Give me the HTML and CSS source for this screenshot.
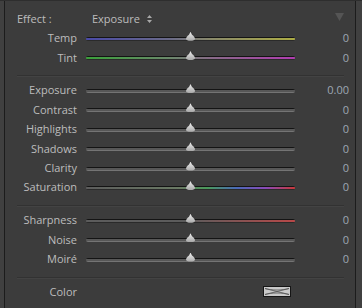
FILE: index.html
```html
<!DOCTYPE html>
<html>
<head>
<meta charset="utf-8">
<link rel="stylesheet" href="styles.css">
</head>
<body>
<div class="frame">
  <div class="panel">
    <div class="header">
      <span class="effect">Effect :</span>
      <span class="preset">Exposure</span>
      <svg class="updown" width="5" height="8" viewBox="0 0 5 8"><path d="M2.5 0 L5 3 L0 3 Z M0 5 L5 5 L2.5 8 Z" fill="#a8a8a8"/></svg>
      <span class="spacer"></span>
      <svg class="collapse" width="9" height="8" viewBox="0 0 9 8"><path d="M0 0 L9 0 L4.5 8 Z" fill="#555"/></svg>
    </div>

    <div class="group">
      <div class="row"><span class="label">Temp</span><div class="track temp"><span class="thumb"></span></div><span class="value">0</span></div>
      <div class="row"><span class="label">Tint</span><div class="track tint"><span class="thumb"></span></div><span class="value">0</span></div>
    </div>
    <div class="divider"></div>

    <div class="group">
      <div class="row"><span class="label">Exposure</span><div class="track"><span class="thumb"></span></div><span class="value">0.00</span></div>
      <div class="row"><span class="label">Contrast</span><div class="track"><span class="thumb"></span></div><span class="value">0</span></div>
      <div class="row"><span class="label">Highlights</span><div class="track"><span class="thumb"></span></div><span class="value">0</span></div>
      <div class="row"><span class="label">Shadows</span><div class="track"><span class="thumb"></span></div><span class="value">0</span></div>
      <div class="row"><span class="label">Clarity</span><div class="track"><span class="thumb"></span></div><span class="value">0</span></div>
      <div class="row"><span class="label">Saturation</span><div class="track sat"><span class="thumb"></span></div><span class="value">0</span></div>
    </div>
    <div class="divider"></div>

    <div class="group">
      <div class="row"><span class="label">Sharpness</span><div class="track sharp"><span class="thumb"></span></div><span class="value">0</span></div>
      <div class="row"><span class="label">Noise</span><div class="track"><span class="thumb"></span></div><span class="value">0</span></div>
      <div class="row"><span class="label">Moiré</span><div class="track"><span class="thumb"></span></div><span class="value">0</span></div>
    </div>
    <div class="divider"></div>

    <div class="color-row">
      <span class="label">Color</span>
      <svg class="swatch" width="28" height="11" viewBox="0 0 28 11">
        <rect x="0.5" y="0.5" width="27" height="10" fill="#c9c9c9" stroke="#151515"/>
        <path d="M2 2.5 C9 4.5 19 4.5 26 2.5 M2 8.5 C9 6.5 19 6.5 26 8.5 M2 2.5 L26 8.5 M2 8.5 L26 2.5" fill="none" stroke="#555" stroke-width="0.8"/>
      </svg>
    </div>
  </div>
</div>
</body>
</html>
```

FILE: styles.css
```css
html, body {
  margin: 0;
  padding: 0;
  background: #3a3a3a;
}
body {
  width: 362px;
  height: 308px;
  overflow: hidden;
  font-family: "Open Sans", "DejaVu Sans", sans-serif;
  font-size: 11px;
  color: #bcbcbc;
}
.frame {
  display: flex;
  height: 308px;
  padding-left: 4px;
  border-top: 1px solid #2e2e2e;
  box-sizing: border-box;
  background: #404040;
}
.panel {
  width: 350px;
  background: #3c3c3c;
  border-left: 1px solid #1c1c1c;
  border-right: 1px solid #1c1c1c;
  padding-top: 8px;
  box-sizing: content-box;
}
.header {
  display: flex;
  align-items: center;
  height: 19px;
  padding-left: 12px;
  padding-right: 11px;
}
.effect {
  width: 75px;
}
.preset {
  margin-right: 7px;
}
.updown {
  margin-top: 1px;
}
.spacer {
  flex: 1;
}
.collapse {
  margin-top: -3px;
}
.group {
  display: flex;
  flex-direction: column;
}
.row {
  display: grid;
  grid-template-columns: 72px 209px 45px;
  column-gap: 9px;
  align-items: center;
  height: 19.4px;
}
.label {
  text-align: right;
  white-space: nowrap;
}
.value {
  text-align: right;
  color: #9ea7b3;
  margin-left: -9px;
}
.track {
  position: relative;
  height: 4px;
  margin-top: 2px;
  border-radius: 2px;
  background: linear-gradient(#141414 0 1px, #575757 1px 3px, #747474 3px);
}
.track.temp {
  background: linear-gradient(#141414 0 1px, transparent 1px 3px, #2a2a2a 3px),
              linear-gradient(90deg, #4a4aa8, #6a6a88 40%, #8a8a6a 60%, #acac44);
}
.track.tint {
  background: linear-gradient(#141414 0 1px, transparent 1px 3px, #2a2a2a 3px),
              linear-gradient(90deg, #3aa03a, #6a886a 40%, #886a88 60%, #b03cb0);
}
.track.sat {
  background: linear-gradient(#141414 0 1px, transparent 1px 3px, #2a2a2a 3px),
              linear-gradient(90deg, #5c5c5c, #6a7a64 45%, #4a9a5a 58%, #4a6ab8 72%, #8a4ab8 86%, #c83838);
}
.track.sharp {
  background: linear-gradient(#141414 0 1px, transparent 1px 3px, #2a2a2a 3px),
              linear-gradient(90deg, #5c5c5c, #5c5c5c 50%, #b84848);
}
.thumb {
  position: absolute;
  left: 100px;
  top: -5px;
  width: 9px;
  height: 9px;
  background: linear-gradient(#eeeeee, #a8a8a8);
  clip-path: path("M4.5 0 L6 3 C8 4.5 9 6 9 7 C9 8.5 7 9 4.5 9 C2 9 0 8.5 0 7 C0 6 1 4.5 3 3 Z");
}
.divider {
  height: 1px;
  background: #323232;
  border-bottom: 1px solid #434343;
  margin: 8.5px 11px 3px 12px;
}
.color-row {
  display: grid;
  grid-template-columns: 72px auto;
  column-gap: 186px;
  align-items: center;
  height: 19px;
}
.swatch {
  margin-top: 1px;
}
```
